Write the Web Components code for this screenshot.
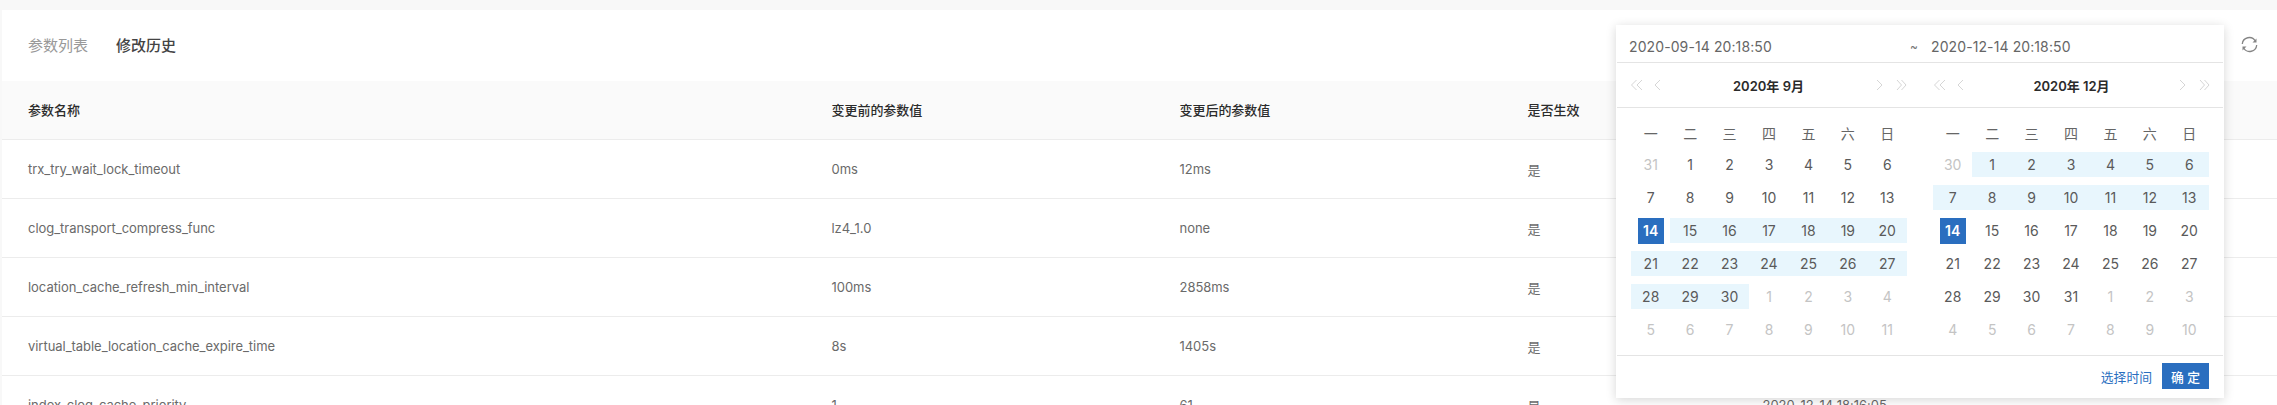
<!DOCTYPE html>
<html lang="zh"><head><meta charset="utf-8"><style>
html,body{margin:0;padding:0;height:405px;overflow:hidden;background:#f8f8f8;font-family:Inter,"Noto Sans CJK SC",sans-serif}
</style></head><body>
<history-page></history-page>
<template id="t-cal"><style>
:host{display:flex;flex-direction:column;flex:none;width:303px;box-sizing:border-box}
.hd{height:44px;display:flex;align-items:center;position:relative;padding:0 14px;border-bottom:1px solid #e4e4e4;font-weight:600;font-size:13px;color:#2b2b2b;justify-content:center;margin-bottom:10px}
.nav{position:absolute;top:0;bottom:0;left:13px;right:13px;display:flex;justify-content:space-between;align-items:center;color:#d6d6d6}
.nav div{display:flex;gap:11px;align-items:center}
svg{display:block}
.grid{display:grid;grid-template-columns:repeat(7,1fr);grid-template-rows:30px;grid-auto-rows:33px;width:276px;margin-left:14px;font-size:14px;color:#5a5a5a}
:host(:last-child) .grid{margin-left:13px}
.c{display:flex;align-items:center;justify-content:center;height:25px;align-self:center}
.w{color:#666}
.o{color:#c4c4c4}
.r{background:#e8f6fd}
.s{width:26px;height:26px;justify-self:center;background:#2a6ebf;color:#fff;font-weight:600}
</style><div class="hd"><div class="nav"><div><svg width="13" height="12" viewBox="0 0 13 12" fill="none" stroke="currentColor"><path d="M6.500 1 1.500 6l5 5M12 1 7 6l5 5"/></svg><svg width="7" height="12" viewBox="0 0 7 12" fill="none" stroke="currentColor"><path d="M6 1 1 6l5 5"/></svg></div><div style="gap:13px"><svg width="7" height="12" viewBox="0 0 7 12" fill="none" stroke="currentColor"><path d="m1 1 5 5-5 5"/></svg><svg width="11" height="12" viewBox="0 0 11 12" fill="none" stroke="currentColor"><path d="m1 1 4.500 5-4.500 5M5.500 1l4.500 5-4.500 5"/></svg></div></div><span id="title"></span></div><div class="grid" id="g"></div></template>
<script>
const calT=document.getElementById('t-cal');
class RangeCal extends HTMLElement{connectedCallback(){const s=this.attachShadow({mode:'open'});s.append(calT.content.cloneNode(true));
 s.getElementById('title').textContent=this.getAttribute('title-text');
 const g=s.getElementById('g');let h='';for(const w of '一二三四五六日')h+=`<div class="c w">${w}</div>`;
 for(const d of this.getAttribute('days').split(' ')){let c='',v=d;
  if(d[0]=='o'){c='o';v=d.slice(1)}else if(d[0]=='r'){c='r';v=d.slice(1)}else if(d[0]=='s'){c='s';v=d.slice(1)}
  h+=`<div class="c ${c}">${v}</div>`}
 g.innerHTML=h;}}
customElements.define('range-cal',RangeCal);

class RangePop extends HTMLElement{connectedCallback(){const s=this.attachShadow({mode:'open'});s.innerHTML=`<style>
:host{display:flex;flex-direction:column;position:absolute;left:1616px;top:25px;width:608px;height:373px;box-sizing:border-box;padding:0 1px;background:#fff;box-shadow:0 2px 10px rgba(0,0,0,.16);color:#555;z-index:5}
.in{flex:none;display:flex;align-items:center;border-bottom:1px solid #e4e4e4;font-size:14px;padding:5px 0 0 12px;box-sizing:content-box;height:32px;color:#666;letter-spacing:.1px}
.in .a{width:281px}.in .t{width:21px;font-size:12px;color:#777}
.cals{display:flex;height:292px;flex:none;border-bottom:1px solid #e4e4e4}
.ft{flex:1;display:flex;align-items:center;justify-content:flex-end;padding:0 14px 2px 0;gap:10px;font-size:12.800px}
.lnk{color:#2a6ebf}
.btn{width:47px;height:26px;background:#2a6ebf;color:#fff;display:flex;align-items:center;justify-content:center;font-size:12.800px;font-weight:500}
</style><div class="in"><span class="a">2020-09-14 20:18:50</span><span class="t">~</span><span>2020-12-14 20:18:50</span></div>
<div class="cals"><range-cal title-text="2020年 9月" days="o31 1 2 3 4 5 6 7 8 9 10 11 12 13 s14 r15 r16 r17 r18 r19 r20 r21 r22 r23 r24 r25 r26 r27 r28 r29 r30 o1 o2 o3 o4 o5 o6 o7 o8 o9 o10 o11"></range-cal><range-cal title-text="2020年 12月" days="o30 r1 r2 r3 r4 r5 r6 r7 r8 r9 r10 r11 r12 r13 s14 15 16 17 18 19 20 21 22 23 24 25 26 27 28 29 30 31 o1 o2 o3 o4 o5 o6 o7 o8 o9 o10"></range-cal></div>
<div class="ft"><span class="lnk">选择时间</span><span class="btn">确 定</span></div>`}}
customElements.define('range-pop',RangePop);

class HistTable extends HTMLElement{connectedCallback(){const s=this.attachShadow({mode:'open'});
 const rows=[['trx_try_wait_lock_timeout','0ms','12ms','是',''],['clog_transport_compress_func','lz4_1.0','none','是',''],['location_cache_refresh_min_interval','100ms','2858ms','是',''],['virtual_table_location_cache_expire_time','8s','1405s','是',''],['index_clog_cache_priority','1','61','是','2020-12-14 18:16:05']];
 const r=(a,c)=>`<div class="row ${c}">${a.map(x=>`<span>${x}</span>`).join('')}</div>`;
 s.innerHTML=`<style>
:host{display:block;font-size:13px;color:#6a6a6a;letter-spacing:-.04px}
.row{display:grid;grid-template-columns:803.500px 348px 348px 235px 1fr;height:58px;align-items:center;padding-left:28px;border-bottom:1px solid #ececec;box-sizing:content-box}
.head{background:#fafafa;color:#2b2b2b;font-weight:500;height:57px;padding-bottom:1px}
</style>`+r(['参数名称','变更前的参数值','变更后的参数值','是否生效',''],'head')+rows.map(a=>r(a,'')).join('');}}
customElements.define('hist-table',HistTable);

class HistPage extends HTMLElement{connectedCallback(){const s=this.attachShadow({mode:'open'});s.innerHTML=`<style>
:host{display:block;position:relative;height:405px;overflow:hidden;padding-top:10px;box-sizing:border-box}
.card{background:#fff;margin-left:2px;margin-right:-2px;height:395px;overflow:hidden}
.tabs{height:71px;display:flex;align-items:center;padding:0 0 3px 26px;gap:28px;font-size:15px;color:#999;box-sizing:border-box}
.on{color:#444;font-weight:500}
hist-table{margin-left:-2px}
.ref{position:absolute;left:2241px;top:36px;color:#858585}
</style><div class="card"><div class="tabs"><span>参数列表</span><span class="on">修改历史</span></div><hist-table></hist-table></div>
<svg class="ref" width="17" height="17" viewBox="0 0 17 17" fill="none" stroke="currentColor" stroke-width="1.300"><path d="M1.300 8A7 7 0 0 1 14.300 5"/><path d="M15.700 9A7 7 0 0 1 2.700 12"/><path d="M15.500 2.500v4h-4z" fill="currentColor" stroke="none"/><path d="M1.500 14.500v-4h4z" fill="currentColor" stroke="none"/></svg>
<range-pop></range-pop>`}}
customElements.define('history-page',HistPage);
</script></body></html>
